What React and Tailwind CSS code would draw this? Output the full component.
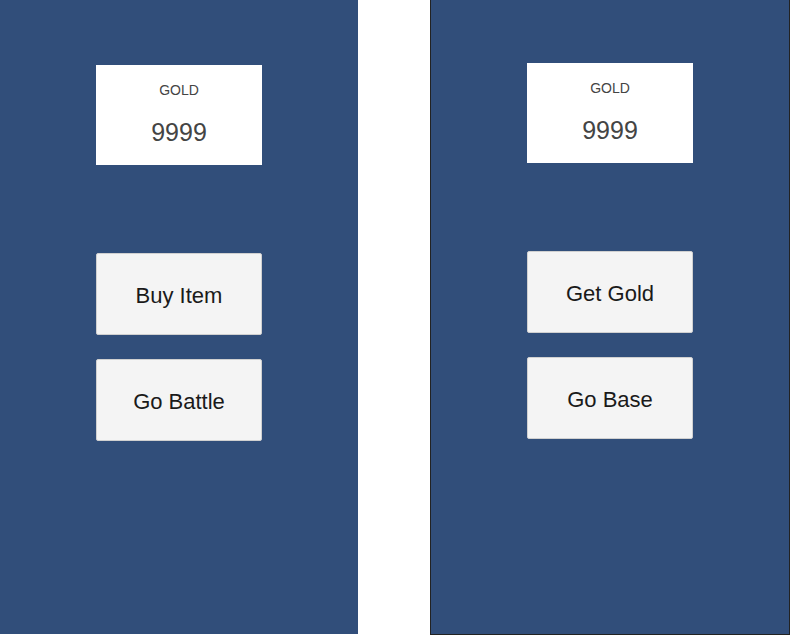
import React from "react";

// Gold display card
function GoldBox() {
  return (
    <div className="w-[166px] h-[100px] bg-white flex flex-col items-center text-[#444444]">
      <p className="mt-[17px] text-[14px] leading-[16px]">GOLD</p>
      <p className="mt-[19px] text-[25px] leading-[30px]">9999</p>
    </div>
  );
}

function MenuButton({ label }) {
  return (
    <button className="w-[166px] h-[82px] bg-[#f4f4f4] border border-[#d0d0d0] rounded-[2px] text-[22px] text-[#1a1a1a] flex items-center justify-center pt-[2px]">
      {label}
    </button>
  );
}

function Panel({ labels, className }) {
  return (
    <div className={"bg-[#314e7a] flex flex-col items-center " + className}>
      <GoldBox />
      <div className="mt-[88px] flex flex-col gap-[24px]">
        {labels.map((label) => (
          <MenuButton key={label} label={label} />
        ))}
      </div>
    </div>
  );
}

export default function App() {
  return (
    <div
      className="w-[790px] h-[638px] bg-white flex gap-[72px]"
      style={{ fontFamily: '"Liberation Sans", Arial, sans-serif' }}
    >
      <Panel labels={["Buy Item", "Go Battle"]} className="w-[358px] h-[634px] pt-[65px]" />
      <Panel
        labels={["Get Gold", "Go Base"]}
        className="w-[360px] h-[635px] pt-[63px] border-l border-r border-b border-[#222222]"
      />
    </div>
  );
}
